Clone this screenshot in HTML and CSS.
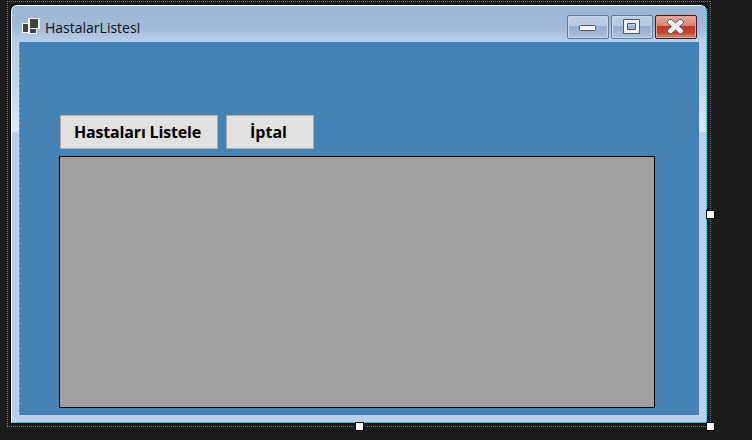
FILE: index.html
```
<!DOCTYPE html>
<html lang="tr">
<head>
<meta charset="utf-8">
<title>HastalarListesI</title>
<link rel="stylesheet" href="styles.css">
</head>
<body>
<div class="designer">
  <div class="selection">
    <div class="window">
      <header class="titlebar">
        <svg class="app-icon" width="18" height="17" viewBox="0 0 18 17" shape-rendering="crispEdges">
          <path fill="#f4f6f8" d="M0 5h6V0h12v11h-3v5H6v-1H0z"/>
          <path fill="#444" d="M8 1h8v9H8zM1 6h5v8H1zM8 11h6v4H8z"/>
        </svg>
        <h1 class="title">HastalarListesI</h1>
        <div class="controls">
          <span class="control">
            <svg width="42" height="24"><rect x="12.500" y="10.500" width="16" height="5" rx="1" fill="#f3f3f3" stroke="#535666"/></svg>
          </span>
          <span class="control">
            <svg width="42" height="24"><path fill="#f0f0f0" fill-rule="evenodd" stroke="#535666" d="M12.500 4.500h16v14h-16zM16.500 8.500h8v6h-8z"/></svg>
          </span>
          <span class="control close">
            <svg width="42" height="24"><path fill="#f3f3f3" stroke="#535666" stroke-linejoin="round" d="M14.500 4.500h2l4 3.500 4-3.500h2l2 2v1.500l-4 3.500 4 3.500v1.500l-2 2h-2l-4-3.500-4 3.500h-2l-2-2v-1.500l4-3.500-4-3.500v-1.500z"/></svg>
          </span>
        </div>
      </header>
      <main class="client">
        <div class="buttons">
          <button class="button list">Hastaları Listele</button>
          <button class="button cancel">İptal</button>
        </div>
        <div class="grid"></div>
      </main>
    </div>
    <i class="handle right"></i>
    <i class="handle bottom"></i>
    <i class="handle corner"></i>
  </div>
</div>
</body>
</html>
```
FILE: styles.css
```
* { box-sizing: border-box; }
body { margin: 0; background: #1b1b1b; font-family: "Open Sans", "Noto Sans", sans-serif; overflow: hidden; }
.designer { height: 440px; padding: 1px 0 0 7px; }
.selection {
  position: relative;
  width: 704px;
  height: 426px;
  padding: 3px;
  background:
    repeating-linear-gradient(90deg, #777 0 1px, transparent 1px 2px) top / 100% 1px no-repeat,
    repeating-linear-gradient(90deg, #777 0 1px, transparent 1px 2px) bottom / 100% 1px no-repeat,
    repeating-linear-gradient(#777 0 1px, transparent 1px 2px) left / 1px 100% no-repeat,
    repeating-linear-gradient(#777 0 1px, transparent 1px 2px) right / 1px 100% no-repeat;
}
.window {
  width: 696px;
  height: 418px;
  padding: 0 7px 7px;
  border: 1px solid;
  border-color: #fff #35d3f0 #35c4dc #fff;
  border-radius: 6px 6px 0 0;
  box-shadow: 0 0 0 1px #000;
  margin: 1px 0 0 1px;
  background: linear-gradient(#9ab5d5, #b9d1ea 36px, #bed4ed 70px, #dce8f6 125px, #b9d1ea 127px);
}
.titlebar { display: flex; height: 36px; margin: 0 -7px; padding: 0 9px 0 10px; background: linear-gradient(#9ab4d3, #a0bad8 60%, #b9d1ea); border-radius: 5px 5px 0 0; }
.app-icon { margin-top: 12px; }
.title { margin: 11px 0 0 5px; font-size: 14px; line-height: 22px; font-weight: 400; color: #111; letter-spacing: 0; }
.controls { display: flex; gap: 2px; margin: 9px 0 0 auto; }
.control {
  width: 42px;
  height: 24px;
  border: 1px solid #637a96;
  border-radius: 2px;
  box-shadow: inset 0 0 0 1px #c6d9ed;
  background: linear-gradient(#bbd0e6, #b4cae2 10px, #96afcc 10px, #a9c1dc);
}
.control svg { display: block; margin: -1px; }
.close { border-color: #4b1420; box-shadow: inset 0 0 0 1px #e4a292; background: linear-gradient(#e4aa9e, #d68475 10px, #b63c26 10px, #c04a32 17px, #d9917c); }
.client { height: 373px; padding: 73px 44px 0 39px; background: #4682b4; border-left: 1px dashed #78a5d0; }
.buttons { display: flex; gap: 8px; padding-left: 1px; }
.button { height: 34px; padding: 0 0 1px; border: 1px solid #adadad; background: #e1e1e1; color: #000; font: 700 16px/30px "Open Sans", "Noto Sans", sans-serif; white-space: nowrap; }
.list { width: 158px; padding-right: 3px; letter-spacing: -.17px; }
.cancel { width: 88px; padding-right: 3px; }
.grid { width: 596px; height: 252px; margin-top: 7px; border: 1px solid #000; background: #a0a0a0; }
.handle { position: absolute; width: 9px; height: 9px; border: 1px solid #000; background: #fff; }
.right { left: 699px; top: 209px; }
.bottom { left: 348px; top: 421px; }
.corner { left: 699px; top: 421px; }
```
